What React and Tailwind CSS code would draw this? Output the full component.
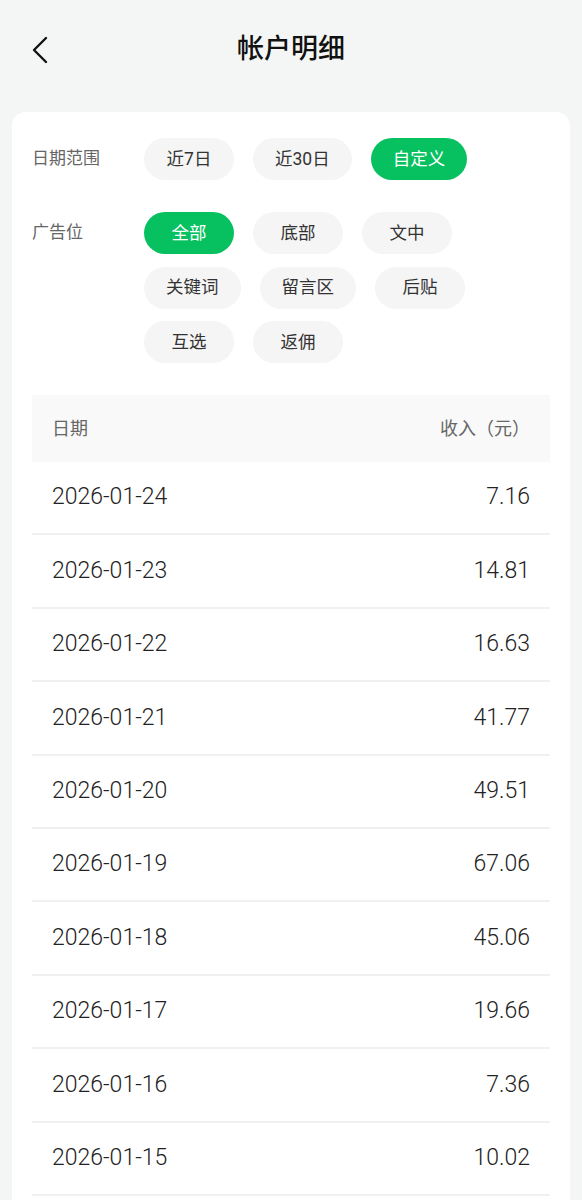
import React from "react";

const dateChips = [
  { t: "近7日", active: false },
  { t: "近30日", active: false },
  { t: "自定义", active: true },
];
const adRows = [
  [{ t: "全部", active: true }, { t: "底部" }, { t: "文中" }],
  [{ t: "关键词" }, { t: "留言区" }, { t: "后贴" }],
  [{ t: "互选" }, { t: "返佣" }],
];
const rows = [
  ["2026-01-24", "7.16"],
  ["2026-01-23", "14.81"],
  ["2026-01-22", "16.63"],
  ["2026-01-21", "41.77"],
  ["2026-01-20", "49.51"],
  ["2026-01-19", "67.06"],
  ["2026-01-18", "45.06"],
  ["2026-01-17", "19.66"],
  ["2026-01-16", "7.36"],
  ["2026-01-15", "10.02"],
];

function Chip({ t, active }) {
  return (
    <div
      className={
        "h-[42px] min-w-[90px] px-[22px] rounded-full flex items-center justify-center text-[17.5px] " +
        (active ? "bg-[#07c160] text-white" : "bg-[#f5f5f5] text-[#333333]")
      }
    >
      {t}
    </div>
  );
}

export default function App() {
  return (
    <div
      className="min-h-screen bg-[#f4f6f5] pb-10"
      style={{ fontFamily: 'Roboto, "Noto Sans CJK SC", sans-serif' }}
    >
      <div className="h-[100px] flex items-center px-[30px]">
        <div className="w-[40px] flex items-center">
          <svg width="20" height="30" viewBox="0 0 20 30" fill="none">
            <path d="M16 3 L4 15 L16 27" stroke="#111" strokeWidth="2.4" strokeLinecap="round" strokeLinejoin="round" />
          </svg>
        </div>
        <div className="flex-1 text-center text-[27px] font-medium text-[#111] pr-[40px] -mt-[2px]">帐户明细</div>
      </div>
      <div className="mx-3 mt-3 rounded-[14px] bg-white px-5 pt-[26px] pb-6">
        <div className="flex">
          <div className="w-[112px] shrink-0 h-[42px] flex items-center text-[17px] text-[#666666]">日期范围</div>
          <div className="flex gap-x-[19px]">
            {dateChips.map((c) => (
              <Chip key={c.t} {...c} />
            ))}
          </div>
        </div>
        <div className="flex mt-[32px]">
          <div className="w-[112px] shrink-0 h-[42px] flex items-center text-[17px] text-[#666666]">广告位</div>
          <div className="flex flex-col gap-y-[12.5px]">
            {adRows.map((r, i) => (
              <div key={i} className="flex gap-x-[19px]">
                {r.map((c) => (
                  <Chip key={c.t} {...c} />
                ))}
              </div>
            ))}
          </div>
        </div>
        <div className="mt-[32px]">
          <div className="h-[67px] bg-[#f9f9f9] flex items-center justify-between px-5 text-[18px] text-[#666666]">
            <span>日期</span>
            <span>收入（元）</span>
          </div>
          {rows.map(([d, v]) => (
            <div
              key={d}
              className="h-[73.4px] border-b-2 border-[#f0f0f0] flex items-center justify-between px-5 text-[23px] font-light text-[#222222]"
            >
              <span>{d}</span>
              <span>{v}</span>
            </div>
          ))}
        </div>
      </div>
    </div>
  );
}
